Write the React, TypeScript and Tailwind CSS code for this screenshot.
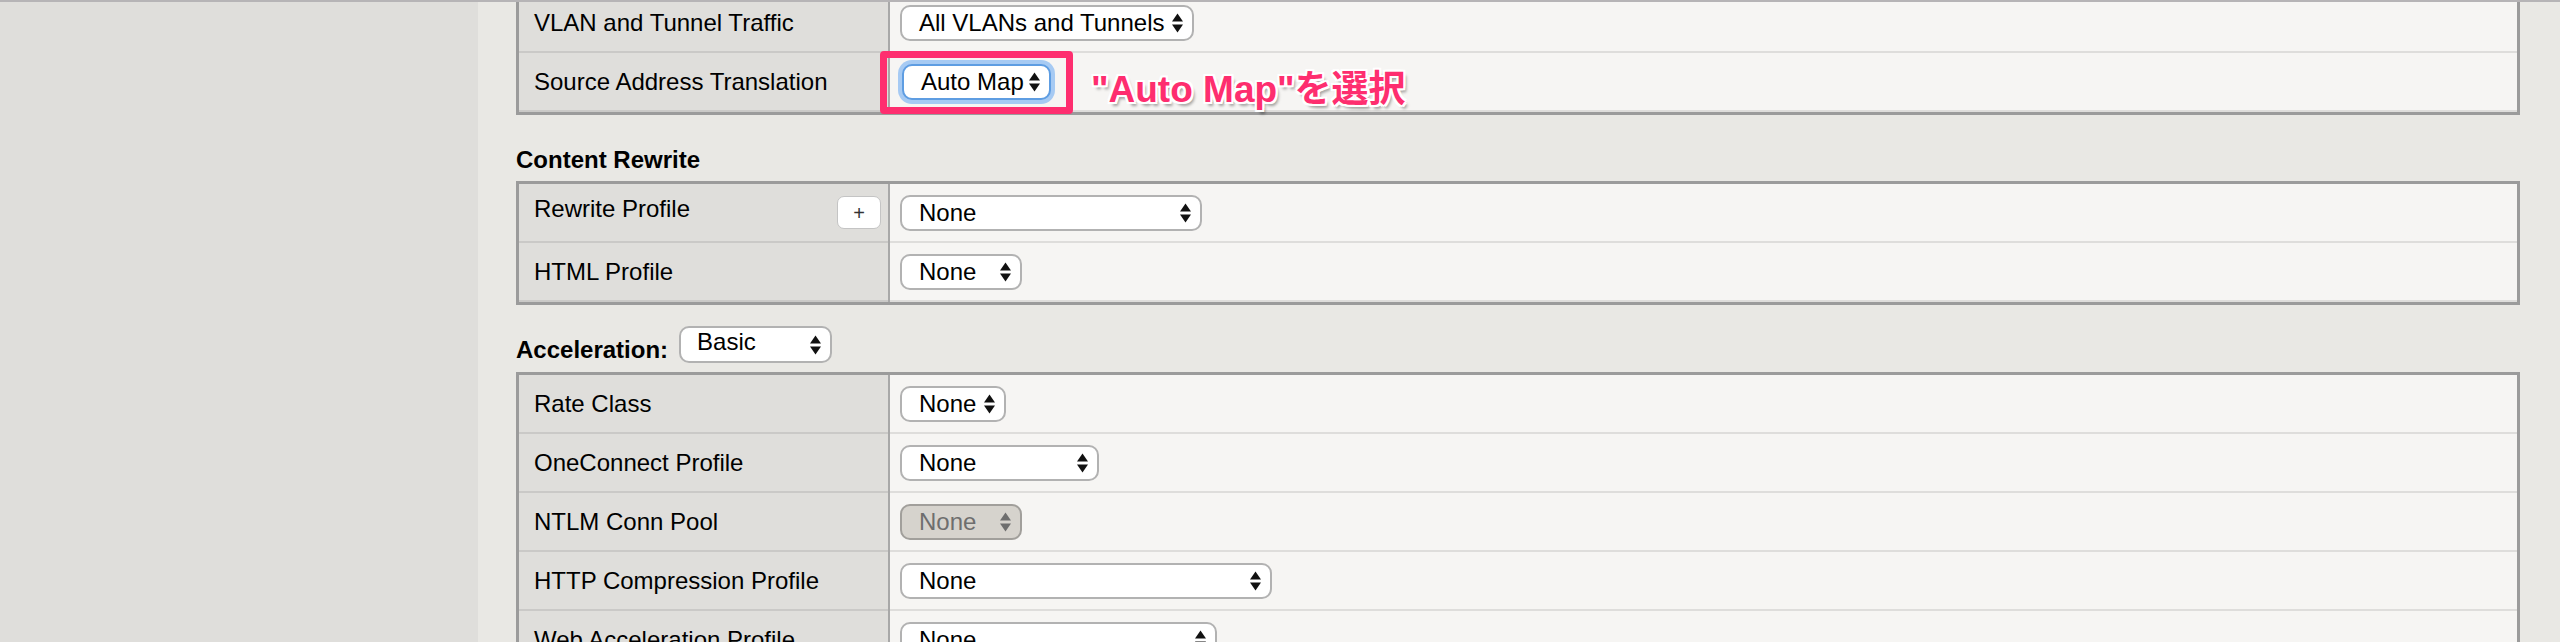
import React from "react";
import clsx from "clsx";

function Arrows({ color }: { color: string }) {
  return (
    <svg width="13" height="22" viewBox="0 0 13 22" className="shrink-0">
      <path d="M6.5 1.5 L12 9.5 H1 Z M6.5 20.5 L12 12.5 H1 Z" fill={color} />
    </svg>
  );
}

function Sel({
  w,
  text,
  disabled,
  focus,
}: {
  w: string;
  text: string;
  disabled?: boolean;
  focus?: boolean;
}) {
  return (
    <div
      className={clsx(
        "flex h-[36px] shrink-0 items-center justify-between rounded-[10px] border-2 pl-[17px] pr-[8px] text-[24px] leading-none",
        w,
        disabled
          ? "border-[#a19f9b] bg-[#d6d3cd] text-[#6e6e6e]"
          : "bg-white text-black",
        !disabled && !focus && "border-[#b2b2b2]",
        focus && "ml-[2px] border-[#5e9de2] shadow-[0_0_0_4px_#a6caf3]"
      )}
    >
      <span>{text}</span>
      <Arrows color={disabled ? "#6e6e6e" : "#111"} />
    </div>
  );
}

type RowDef = {
  label: string;
  sel: React.ReactNode;
  plus?: boolean;
};

function Table({ rows, className }: { rows: RowDef[]; className?: string }) {
  return (
    <div className={clsx("border-[3px] border-[#9b9b9b] bg-[#f6f5f3]", className)}>
      {rows.map((r) => (
        <div key={r.label} className="flex h-[59px]">
          <div className="flex w-[369px] shrink-0 items-center justify-between border-b-2 border-[#cac9c7] bg-[#dfdedb] pl-[15px] pr-[7px]">
            <span className={clsx(r.plus && "-translate-y-[4px]")}>{r.label}</span>
            {r.plus && (
              <div className="flex h-[33px] w-[44px] items-center justify-center rounded-[7px] border border-[#c4c4c4] bg-white text-[20px] leading-none text-[#333]">
                +
              </div>
            )}
          </div>
          <div className="w-[2px] shrink-0 bg-[#a8a8a8]" />
          <div className="flex flex-1 items-center border-b-2 border-[#dedddb] pl-[10px]">
            {r.sel}
          </div>
        </div>
      ))}
    </div>
  );
}

export default function App() {
  return (
    <div className="relative flex h-[642px] w-[2560px] overflow-hidden border-t-2 border-[#b6b4b6] bg-[#e9e8e4] font-['Liberation_Sans',Arial,sans-serif] text-[24px] text-black">
      <div className="w-[478px] shrink-0 bg-[#dfdedb]" />
      <div className="ml-[38px] w-[2004px] shrink-0">
        <Table
          className="-mt-[11px]"
          rows={[
            {
              label: "VLAN and Tunnel Traffic",
              sel: <Sel w="w-[294px]" text="All VLANs and Tunnels" />,
            },
            {
              label: "Source Address Translation",
              sel: <Sel w="w-[149px]" text="Auto Map" focus />,
            },
          ]}
        />
        <div className="mb-[7px] mt-[31px] text-[24px] font-bold leading-[28px]">
          Content Rewrite
        </div>
        <Table
          rows={[
            {
              label: "Rewrite Profile",
              plus: true,
              sel: <Sel w="w-[302px]" text="None" />,
            },
            {
              label: "HTML Profile",
              sel: <Sel w="w-[122px]" text="None" />,
            },
          ]}
        />
        <div className="mb-[9px] mt-[21px] flex items-end gap-[11px]">
          <span className="mb-[-1px] font-bold leading-[28px]">Acceleration:</span>
          <div className="flex h-[37px] w-[153px] items-center justify-between rounded-[10px] border-2 border-[#b2b2b2] bg-white pl-[16px] pr-[8px] leading-none">
            <span className="-translate-y-[3px]">Basic</span>
            <Arrows color="#111" />
          </div>
        </div>
        <Table
          rows={[
            { label: "Rate Class", sel: <Sel w="w-[106px]" text="None" /> },
            { label: "OneConnect Profile", sel: <Sel w="w-[199px]" text="None" /> },
            { label: "NTLM Conn Pool", sel: <Sel w="w-[122px]" text="None" disabled /> },
            { label: "HTTP Compression Profile", sel: <Sel w="w-[372px]" text="None" /> },
            { label: "Web Acceleration Profile", sel: <Sel w="w-[317px]" text="None" /> },
          ]}
        />
      </div>

      <div className="absolute left-[880px] top-[49px] h-[63px] w-[193px] rounded-[4px] border-[7px] border-[#fe2e6f]" />
      <div className="absolute left-[1091px] top-[67px] whitespace-nowrap font-['Liberation_Sans','Noto_Sans_CJK_JP',sans-serif] text-[37px] font-bold leading-[42px] text-[#fe2e6f] [text-shadow:2px_0_0_#fff,-2px_0_0_#fff,0_2px_0_#fff,0_-2px_0_#fff,2px_2px_0_#fff,-2px_-2px_0_#fff,2px_-2px_0_#fff,-2px_2px_0_#fff,3px_4px_3px_rgba(0,0,0,0.35)]">
        "Auto Map"を選択
      </div>
    </div>
  );
}
